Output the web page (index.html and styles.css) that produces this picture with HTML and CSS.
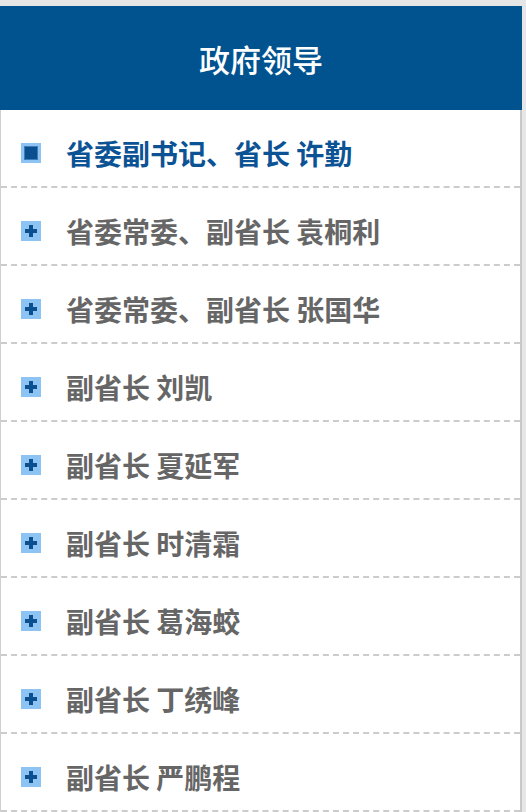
FILE: index.html
```html
<!DOCTYPE html>
<html lang="zh-CN">

<head>
    <meta charset="UTF-8">
    <meta name="viewport" content="width=device-width, initial-scale=1.0">
    <title>政府领导</title>
    <link rel="stylesheet" href="styles.css">
</head>

<body>
    <div class="page">
        <h1 class="title">政府领导</h1>
        <ul class="leaders">
            <li class="item active">
                <svg class="icon" width="20" height="20" viewBox="0 0 20 20">
                    <rect width="20" height="20" fill="#8ec4f4" />
                    <rect x="3" y="3" width="14" height="14" fill="#3f7bb8" />
                    <rect x="4" y="4" width="12" height="12" fill="#0b4f8f" />
                </svg>
                <span>省委副书记、省长 许勤</span>
            </li>
            <li class="item">
                <svg class="icon" width="20" height="20" viewBox="0 0 20 20">
                    <rect width="20" height="20" fill="#8ec4f4" />
                    <path d="M8 4h4v4h4v4h-4v4h-4v-4h-4v-4h4z" fill="#0b4f8f" />
                </svg>
                <span>省委常委、副省长 袁桐利</span>
            </li>
            <li class="item">
                <svg class="icon" width="20" height="20" viewBox="0 0 20 20">
                    <rect width="20" height="20" fill="#8ec4f4" />
                    <path d="M8 4h4v4h4v4h-4v4h-4v-4h-4v-4h4z" fill="#0b4f8f" />
                </svg>
                <span>省委常委、副省长 张国华</span>
            </li>
            <li class="item">
                <svg class="icon" width="20" height="20" viewBox="0 0 20 20">
                    <rect width="20" height="20" fill="#8ec4f4" />
                    <path d="M8 4h4v4h4v4h-4v4h-4v-4h-4v-4h4z" fill="#0b4f8f" />
                </svg>
                <span>副省长 刘凯</span>
            </li>
            <li class="item">
                <svg class="icon" width="20" height="20" viewBox="0 0 20 20">
                    <rect width="20" height="20" fill="#8ec4f4" />
                    <path d="M8 4h4v4h4v4h-4v4h-4v-4h-4v-4h4z" fill="#0b4f8f" />
                </svg>
                <span>副省长 夏延军</span>
            </li>
            <li class="item">
                <svg class="icon" width="20" height="20" viewBox="0 0 20 20">
                    <rect width="20" height="20" fill="#8ec4f4" />
                    <path d="M8 4h4v4h4v4h-4v4h-4v-4h-4v-4h4z" fill="#0b4f8f" />
                </svg>
                <span>副省长 时清霜</span>
            </li>
            <li class="item">
                <svg class="icon" width="20" height="20" viewBox="0 0 20 20">
                    <rect width="20" height="20" fill="#8ec4f4" />
                    <path d="M8 4h4v4h4v4h-4v4h-4v-4h-4v-4h4z" fill="#0b4f8f" />
                </svg>
                <span>副省长 葛海蛟</span>
            </li>
            <li class="item">
                <svg class="icon" width="20" height="20" viewBox="0 0 20 20">
                    <rect width="20" height="20" fill="#8ec4f4" />
                    <path d="M8 4h4v4h4v4h-4v4h-4v-4h-4v-4h4z" fill="#0b4f8f" />
                </svg>
                <span>副省长 丁绣峰</span>
            </li>
            <li class="item">
                <svg class="icon" width="20" height="20" viewBox="0 0 20 20">
                    <rect width="20" height="20" fill="#8ec4f4" />
                    <path d="M8 4h4v4h4v4h-4v4h-4v-4h-4v-4h4z" fill="#0b4f8f" />
                </svg>
                <span>副省长 严鹏程</span>
            </li>
        </ul>
    </div>
</body>

</html>
```

FILE: styles.css
```css
body {
    margin: 0;
    background: #e6e6e6;
    font-family: "Noto Sans CJK SC", "Noto Sans", sans-serif;
}

.page {
    width: 522px;
    padding-top: 6px;
}

.title {
    margin: 0;
    height: 104px;
    line-height: 106px;
    background: #01538f;
    color: #fff;
    text-align: center;
    font-size: 31px;
    font-weight: 500;
}

.leaders {
    list-style: none;
    margin: 0;
    padding: 0;
    background: #fff;
    border-left: 1px solid #cfcfcf;
    border-right: 2px solid #c8c8c8;
}

.item {
    display: flex;
    align-items: center;
    box-sizing: border-box;
    height: 78px;
    padding-top: 9px;
    padding-left: 20px;
    border-bottom: 2px dashed #cccccc;
    color: #666;
    font-size: 28px;
    font-weight: bold;
}

.item .icon {
    flex-shrink: 0;
    margin-right: 25px;
}

.item.active {
    color: #0b5394;
}
```
